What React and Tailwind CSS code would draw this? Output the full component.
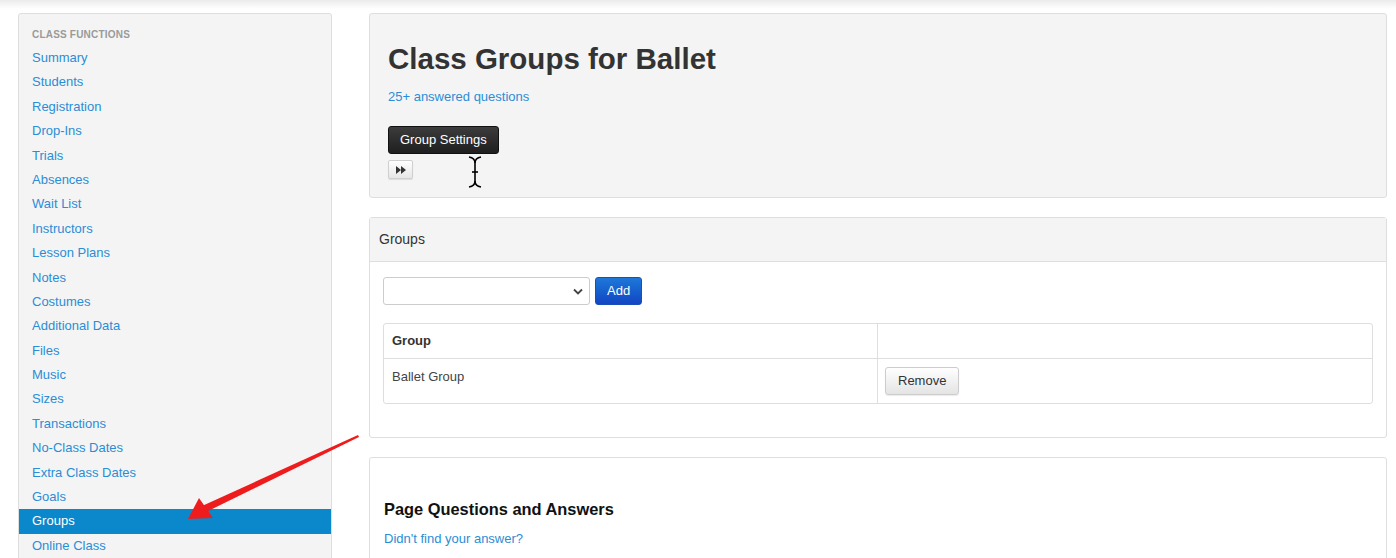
import React from "react";

const links = [
  "Summary",
  "Students",
  "Registration",
  "Drop-Ins",
  "Trials",
  "Absences",
  "Wait List",
  "Instructors",
  "Lesson Plans",
  "Notes",
  "Costumes",
  "Additional Data",
  "Files",
  "Music",
  "Sizes",
  "Transactions",
  "No-Class Dates",
  "Extra Class Dates",
  "Goals",
  "Groups",
  "Online Class",
];

const Sidebar = () => (
  <div className="w-[314px] shrink-0 h-[560px] bg-[#f4f4f4] border border-[#dedede] rounded-[3px] pt-[13px] overflow-hidden">
    <div className="px-[13px] text-[10px] leading-[16px] font-bold tracking-[0.2px] text-[#9a9a9a] mb-[3px]">
      CLASS FUNCTIONS
    </div>
    <ul>
      {links.map((l) => (
        <li
          key={l}
          className={
            l === "Groups"
              ? "px-[13px] h-[24.4px] leading-[24.4px] text-[13px] bg-[#0b87cc] text-white"
              : "px-[13px] h-[24.4px] leading-[24.4px] text-[13px] text-[#2b8dd6]"
          }
        >
          {l}
        </li>
      ))}
    </ul>
  </div>
);

const Chevron = () => (
  <svg width="10" height="7" viewBox="0 0 10 7">
    <path d="M1 1.5 L5 5.5 L9 1.5" fill="none" stroke="#444" strokeWidth="1.8" />
  </svg>
);

const App = () => {
  return (
    <div
      className="relative w-[1396px] h-[558px] overflow-hidden bg-white"
      style={{ fontFamily: '"Liberation Sans", Arial, sans-serif' }}
    >
      <div className="h-[9px] bg-gradient-to-b from-[#ebebeb] to-white" />
      <div className="flex gap-[37px] pl-[18px] pr-[9px] pt-[4px]">
        <Sidebar />

        <div className="flex-1 flex flex-col gap-[19px]">
          {/* title panel */}
          <div className="bg-[#f4f4f4] border border-[#dedede] rounded-[3px] px-[18px] pt-[28px] pb-[18px]">
            <h1 className="text-[29.5px] leading-[33px] font-bold text-[#333]">
              Class Groups for Ballet
            </h1>
            <div className="mt-[12px] text-[13px] leading-[20px] text-[#2b8dd6]">
              25+ answered questions
            </div>
            <button className="mt-[19px] block h-[28px] px-[11px] rounded-[3px] bg-gradient-to-b from-[#3c3c3c] to-[#1f1f1f] text-white text-[13px] border border-[#111]">
              Group Settings
            </button>
            <button className="mt-[6px] flex items-center justify-center w-[25px] h-[19px] rounded-[2px] border border-[#cfcfcf] bg-gradient-to-b from-white to-[#e6e6e6] shadow-[0_1px_1px_rgba(0,0,0,0.1)]">
              <svg width="10" height="8" viewBox="0 0 10 8">
                <path d="M0 0 L5 4 L0 8 Z M5 0 L10 4 L5 8 Z" fill="#333" />
              </svg>
            </button>
          </div>

          {/* groups panel */}
          <div className="border border-[#dedede] rounded-[3px] bg-white">
            <div className="h-[44px] bg-[#f4f4f4] border-b border-[#dedede] flex items-center px-[9px] text-[14px] text-[#333]">
              Groups
            </div>
            <div className="px-[13px] pt-[15px] pb-[33px]">
              <div className="flex gap-[5px]">
                <div className="w-[207px] h-[28px] border border-[#cccccc] rounded-[3px] bg-white flex items-center justify-end pr-[6px]">
                  <Chevron />
                </div>
                <button className="h-[28px] px-[11px] rounded-[3px] bg-gradient-to-b from-[#1f78d8] to-[#1445c4] text-white text-[13px] border border-[#1a4fb8]">
                  Add
                </button>
              </div>
              <div className="mt-[18px] border border-[#dedede] rounded-[3px] text-[13px] text-[#333]">
                <div className="grid grid-cols-2 h-[35px] border-b border-[#dedede]">
                  <div className="px-[8px] flex items-center font-bold text-[#333] border-r border-[#dedede]">
                    Group
                  </div>
                  <div />
                </div>
                <div className="grid grid-cols-2 h-[44px]">
                  <div className="px-[8px] pt-[8px] leading-[20px] text-[#444] border-r border-[#dedede]">
                    Ballet Group
                  </div>
                  <div className="pl-[7px] pt-[8px]">
                    <button className="h-[28px] px-[12px] rounded-[3px] border border-[#cccccc] bg-gradient-to-b from-white to-[#e4e4e4] text-[13px] text-[#333] shadow-[0_1px_1px_rgba(0,0,0,0.08)]">
                      Remove
                    </button>
                  </div>
                </div>
              </div>
            </div>
          </div>

          {/* Q&A panel */}
          <div className="border border-[#dedede] rounded-[3px] bg-white px-[14px] pt-[41px] h-[140px]">
            <h2 className="text-[16.4px] leading-[20px] font-bold text-[#111]">
              Page Questions and Answers
            </h2>
            <div className="mt-[10px] text-[13px] leading-[20px] text-[#2b8dd6]">
              Didn't find your answer?
            </div>
          </div>
        </div>
      </div>

      {/* annotation overlay: red arrow and text cursor */}
      <svg
        className="absolute left-0 top-0 pointer-events-none"
        width="1396"
        height="558"
        viewBox="0 0 1396 558"
      >
        <polygon points="358,435 359,437 206,512 202,506" fill="#ee1c1c" />
        <polygon points="188,519 199,498 213,518" fill="#ee1c1c" />
        <g fill="none" stroke="#000" strokeWidth="1.6">
          <path d="M469 157 Q475 158 475 163 L475 181 Q475 186 469 187" />
          <path d="M481 157 Q475 158 475 163 M475 181 Q475 186 481 187" />
          <path d="M472 172 L478 172" />
        </g>
      </svg>
    </div>
  );
};

export default App;
